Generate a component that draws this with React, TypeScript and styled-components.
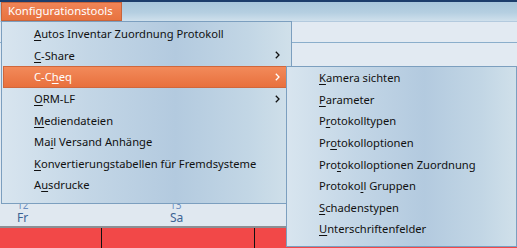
import React from "react";
import styled, { createGlobalStyle } from "styled-components";

const GlobalStyle = createGlobalStyle`
  html, body {
    margin: 0;
    padding: 0;
    background: #e1e9f1;
  }
  body {
    font-family: "Noto Sans", "Open Sans", sans-serif;
  }
`;

interface MenuEntry {
  label: string;
  key: number; // index of the underlined letter
  sub?: boolean;
}

const mainItems: MenuEntry[] = [
  { label: "Autos Inventar Zuordnung Protokoll", key: 0 },
  { label: "C-Share", key: 0, sub: true },
  { label: "C-Cheq", key: 3, sub: true },
  { label: "ORM-LF", key: 0, sub: true },
  { label: "Mediendateien", key: 0 },
  { label: "Mail Versand Anhänge", key: 2 },
  { label: "Konvertierungstabellen für Fremdsysteme", key: 0 },
  { label: "Ausdrucke", key: 1 },
];

const subItems: MenuEntry[] = [
  { label: "Kamera sichten", key: 0 },
  { label: "Parameter", key: 0 },
  { label: "Protokolltypen", key: 1 },
  { label: "Protokolloptionen", key: 2 },
  { label: "Protokolloptionen Zuordnung", key: 3 },
  { label: "Protokoll Gruppen", key: 7 },
  { label: "Schadenstypen", key: 0 },
  { label: "Unterschriftenfelder", key: 0 },
];

function App() {
  return (
    <>
      <GlobalStyle />
      <Page>
        <TopBar>
          <MenuButton>Konfigurationstools</MenuButton>
        </TopBar>
        <HeaderStrip />
        <Body />
        <DateRow>
          <DayCell>
            <DayNum>12</DayNum>
            <DayName>Fr</DayName>
          </DayCell>
          <DayCell>
            <DayNum>13</DayNum>
            <DayName>Sa</DayName>
          </DayCell>
        </DateRow>
        <RedBand>
          <RedCell $w={101} />
          <RedCell $w={152} />
          <RedCell $w={264} />
        </RedBand>

        <MainMenu>
          {mainItems.map((item, i) => (
            <Item key={i} label={item.label} mnemonic={item.key} sub={item.sub} active={i === 2} />
          ))}
        </MainMenu>

        <SubMenu>
          {subItems.map((item, i) => (
            <Item key={i} label={item.label} mnemonic={item.key} />
          ))}
        </SubMenu>
      </Page>
    </>
  );
}

export default App;

//menu item
const Item = ({ label, mnemonic, sub, active }: ItemProps) => {
  return (
    <ItemRow $active={!!active}>
      <ItemText>
        {label.slice(0, mnemonic)}
        <u>{label.charAt(mnemonic)}</u>
        {label.slice(mnemonic + 1)}
      </ItemText>
      {sub && (
        <Chevron width="5" height="8" viewBox="0 0 5 8">
          <path d="M0.8 0.8 L4 4 L0.8 7.2" fill="none" stroke="currentColor" strokeWidth="1.3" />
        </Chevron>
      )}
    </ItemRow>
  );
};

interface ItemProps {
  label: string;
  mnemonic: number;
  sub?: boolean;
  active?: boolean;
}

const Page = styled.div`
  position: relative;
  width: 517px;
  height: 248px;
  overflow: hidden;
  display: flex;
  flex-direction: column;
  background: #e1e9f1;
`;

const TopBar = styled.div`
  height: 19px;
  border-top: 2px solid #1d3d6b;
  border-bottom: 1px solid #b3cade;
  background: linear-gradient(to bottom, #a9c6db 0%, #b5cfe1 55%, #cfe0ec 100%);
  display: flex;
  align-items: flex-end;
  padding-left: 1px;
`;

const MenuButton = styled.div`
  box-sizing: border-box;
  width: 121px;
  height: 19px;
  padding-left: 6px;
  background: linear-gradient(to bottom, #ef8457 0%, #e8733f 100%);
  border: 1px solid #c8643a;
  color: #fff;
  font-size: 11.3px;
  line-height: 16px;
`;

const HeaderStrip = styled.div`
  height: 20px;
  background: #e2eaf2;
  border-bottom: 1px solid #8aaecb;
`;

const Body = styled.div`
  flex: 1;
  background: #e2eaf2;
`;

const DateRow = styled.div`
  height: 26px;
  display: flex;
  background: #e0e8f0;
  border-bottom: 2px solid #8b8f94;
`;

const DayCell = styled.div`
  box-sizing: border-box;
  width: 153px;
  padding-left: 17px;
  display: flex;
  flex-direction: column;
  gap: 2px;
`;

const DayNum = styled.span`
  font-size: 10px;
  line-height: 10px;
  color: #6a8ec0;
`;

const DayName = styled.span`
  font-size: 12px;
  line-height: 12px;
  color: #3c6394;
`;

const RedBand = styled.div`
  height: 20px;
  display: flex;
  background: #f24848;
`;

const RedCell = styled.div<{ $w: number }>`
  width: ${(p) => p.$w}px;
  flex-shrink: 0;
  border-right: 1px solid #111;
  &:last-child {
    border-right: none;
  }
`;

const MenuPanel = styled.div`
  position: absolute;
  box-sizing: border-box;
  border: 1px solid #7c9fbf;
  background: linear-gradient(
    to right,
    #d8e5ef 0%,
    #c3d6e6 30%,
    #b3cadf 60%,
    #c2d6e5 85%,
    #d0e0ea 100%
  );
  display: flex;
  flex-direction: column;
`;

const MainMenu = styled(MenuPanel)`
  left: 1px;
  top: 21px;
  width: 291px;
  height: 183px;
  padding: 1px 4px 0 1px;
`;

const SubMenu = styled(MenuPanel)`
  left: 286px;
  top: 66px;
  width: 231px;
  height: 181px;
  padding: 0 2px 0 1px;
`;

const ItemRow = styled.div<{ $active: boolean }>`
  box-sizing: border-box;
  height: 21.6px;
  flex-shrink: 0;
  display: flex;
  align-items: center;
  padding-left: 30px;
  padding-right: 6px;
  font-size: 11.2px;
  color: ${(p) => (p.$active ? "#fff" : "#111")};
  background: ${(p) =>
    p.$active ? "linear-gradient(to bottom, #f28a5a 0%, #e8703d 100%)" : "transparent"};
  border: 1px solid ${(p) => (p.$active ? "#d0673c" : "transparent")};

  u {
    text-underline-offset: 2px;
  }
`;

const ItemText = styled.span`
  flex: 1;
  white-space: nowrap;
`;

const Chevron = styled.svg`
  display: block;
  flex-shrink: 0;
`;
